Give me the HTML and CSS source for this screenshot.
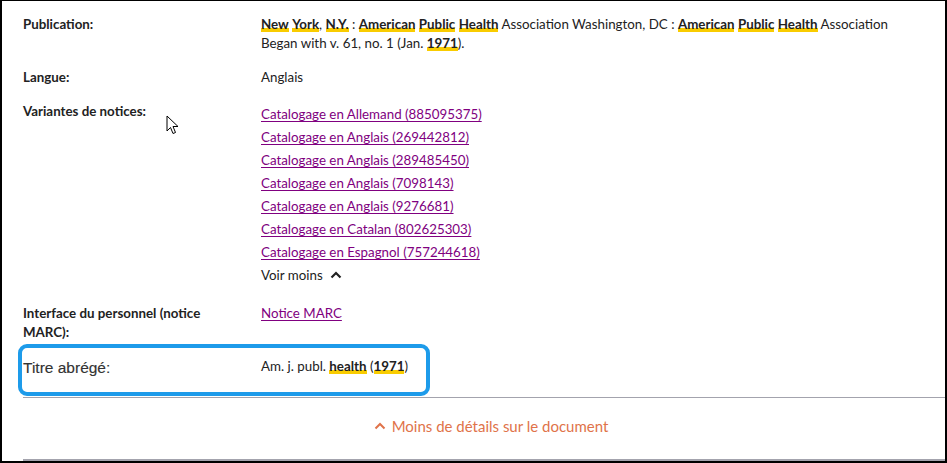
FILE: index.html
```html
<!DOCTYPE html>
<html lang="fr">
<head>
<meta charset="utf-8">
<link rel="stylesheet" href="styles.css">
</head>
<body>
<div class="frame">
  <div class="details">
    <div class="row">
      <div class="label">Publication:</div>
      <div class="value">
        <div><b class="hl">New</b> <b class="hl">York</b>, <b class="hl">N.Y.</b> : <b class="hl">American</b> <b class="hl">Public</b> <b class="hl">Health</b> Association Washington, DC : <b class="hl">American</b> <b class="hl">Public</b> <b class="hl">Health</b> Association</div>
        <div>Began with v. 61, no. 1 (Jan. <b class="hl">1971</b>).</div>
      </div>
    </div>
    <div class="row">
      <div class="label">Langue:</div>
      <div class="value">Anglais</div>
    </div>
    <div class="row">
      <div class="label">Variantes de notices:</div>
      <div class="value links">
        <a href="#">Catalogage en Allemand (885095375)</a>
        <a href="#">Catalogage en Anglais (269442812)</a>
        <a href="#">Catalogage en Anglais (289485450)</a>
        <a href="#">Catalogage en Anglais (7098143)</a>
        <a href="#">Catalogage en Anglais (9276681)</a>
        <a href="#">Catalogage en Catalan (802625303)</a>
        <a href="#">Catalogage en Espagnol (757244618)</a>
        <span class="toggle">Voir moins
          <svg class="chev" width="12" height="8" viewBox="0 0 12 8"><path d="M1.5 6.5 L6 2 L10.5 6.5" fill="none" stroke="#222" stroke-width="2.2"/></svg>
        </span>
      </div>
    </div>
    <div class="row">
      <div class="label">Interface du personnel (notice MARC):</div>
      <div class="value"><a href="#">Notice MARC</a></div>
    </div>
    <div class="row marked">
      <div class="label alt">Titre abrégé:</div>
      <div class="value">Am. j. publ. <b class="hl">health</b> (<b class="hl">1971</b>)</div>
    </div>
    <div class="footer">
      <span class="less">
        <svg class="chev-o" width="12" height="8" viewBox="0 0 12 8"><path d="M1.5 6.5 L6 2 L10.5 6.5" fill="none" stroke="#e0734a" stroke-width="2"/></svg>
        Moins de détails sur le document
      </span>
    </div>
  </div>
  <svg class="cursor" width="13" height="20" viewBox="0 0 13 20"><path d="M1 1 L1 16 L4.5 12.5 L7 18.5 L9.5 17.5 L7 11.5 L12 11.5 Z" fill="#fff" stroke="#000" stroke-width="1"/></svg>
</div>
</body>
</html>
```

FILE: styles.css
```css
html, body {
  margin: 0;
  padding: 0;
  background: #fff;
}
.frame {
  position: relative;
  box-sizing: border-box;
  width: 947px;
  height: 463px;
  border: 2px solid #000;
  border-top-width: 1px;
  overflow: hidden;
  font-family: Lato, "Open Sans", sans-serif;
  font-size: 13.33px;
  color: #222;
}
.details {
  margin-left: 21px;
  width: 936px;
  padding-top: 14px;
}
.row {
  display: grid;
  grid-template-columns: 238px 1fr;
  line-height: 19px;
  margin-bottom: 15px;
}
.label {
  font-weight: 700;
  padding-right: 30px;
}
.label.alt {
  font-family: "Liberation Sans", Arial, sans-serif;
  font-size: 15.5px;
  font-weight: 400;
  color: #333;
  -webkit-text-stroke: 0.15px #333;
  padding-top: 1px;
}
.hl {
  font-weight: 700;
  background: linear-gradient(to bottom, transparent 72%, #f9cc00 72%);
}
.links {
  display: flex;
  flex-direction: column;
  align-items: flex-start;
  line-height: 23px;
  padding-top: 1px;
}
a {
  color: #800080;
  text-decoration: underline;
  text-underline-offset: 2px;
}
.toggle {
  display: flex;
  align-items: center;
  gap: 7px;
  padding-bottom: 2px;
}
.chev { margin-top: -1px; }
.marked {
  position: relative;
  margin-bottom: 20px;
}
.marked::before {
  content: "";
  position: absolute;
  left: -5px;
  top: -13px;
  width: 404px;
  height: 44px;
  border: 4px solid #1d9bea;
  border-radius: 9px;
}
.footer {
  border-top: 1px solid #a3a3ad;
  border-bottom: 2px solid #a3a3ad;
  height: 64px;
  box-sizing: border-box;
  padding-top: 18px;
  display: flex;
  justify-content: center;
  align-items: flex-start;
}
.less {
  color: #e0734a;
  font-size: 15px;
  line-height: 20px;
  display: flex;
  align-items: center;
  gap: 6px;
}
.cursor {
  position: absolute;
  left: 164px;
  top: 114px;
}
```
